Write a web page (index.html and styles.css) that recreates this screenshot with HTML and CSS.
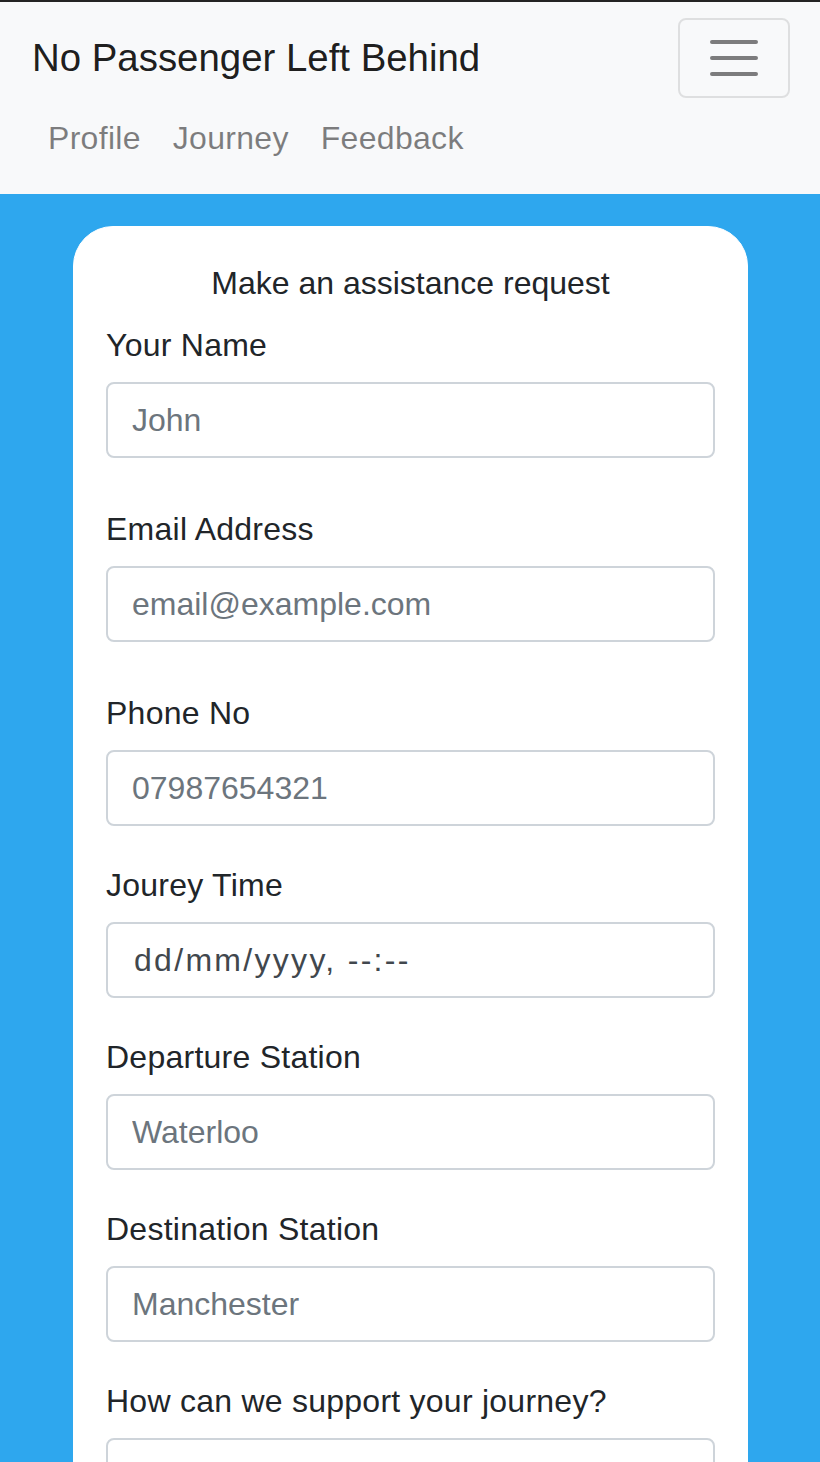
FILE: index.html
```html
<!DOCTYPE html>
<html lang="en">
<head>
<meta charset="utf-8">
<title>No Passenger Left Behind</title>
<link rel="stylesheet" href="styles.css">
</head>
<body>
<div class="topline"></div>
<nav class="navbar">
  <div class="navbar-row">
    <a class="brand" href="#">No Passenger Left Behind</a>
    <button class="toggler" type="button" aria-label="Toggle navigation">
      <svg width="60" height="60" viewBox="0 0 30 30" xmlns="http://www.w3.org/2000/svg">
        <path d="M4 7h22M4 15h22M4 23h22" stroke="rgba(0,0,0,0.5)" stroke-width="2" stroke-linecap="round" stroke-miterlimit="10" fill="none"/>
      </svg>
    </button>
  </div>
  <ul class="nav-list">
    <li><a class="nav-link" href="#">Profile</a></li>
    <li><a class="nav-link" href="#">Journey</a></li>
    <li><a class="nav-link" href="#">Feedback</a></li>
  </ul>
</nav>
<main class="page">
  <form class="card">
    <p class="card-title">Make an assistance request</p>
    <div class="group group-extra">
      <label class="label" for="name">Your Name</label>
      <input class="control" id="name" type="text" placeholder="John">
    </div>
    <div class="group group-extra">
      <label class="label" for="email">Email Address</label>
      <input class="control" id="email" type="email" placeholder="email@example.com">
    </div>
    <div class="group">
      <label class="label" for="phone">Phone No</label>
      <input class="control" id="phone" type="tel" placeholder="07987654321">
    </div>
    <div class="group">
      <label class="label" for="time">Jourey Time</label>
      <div class="control control-date" id="time">dd/mm/yyyy, --:--</div>
    </div>
    <div class="group">
      <label class="label" for="dep">Departure Station</label>
      <input class="control" id="dep" type="text" placeholder="Waterloo">
    </div>
    <div class="group">
      <label class="label" for="dest">Destination Station</label>
      <input class="control" id="dest" type="text" placeholder="Manchester">
    </div>
    <div class="group">
      <label class="label" for="support">How can we support your journey?</label>
      <textarea class="control control-area" id="support" rows="3"></textarea>
    </div>
  </form>
</main>
</body>
</html>
```
FILE: styles.css
```css
* { box-sizing: border-box; }
html, body { margin: 0; padding: 0; }
body {
  font-family: "Liberation Sans", Arial, sans-serif;
  font-size: 32px;
  line-height: 1.5;
  color: #212529;
  background: #2ea7ee;
}
.topline { height: 2px; background: #232323; }
.navbar {
  background: #f8f9fa;
  padding: 16px 32px;
}
.navbar-row {
  display: flex;
  align-items: center;
  justify-content: space-between;
}
.brand {
  display: inline-block;
  padding: 10px 0;
  font-size: 38.4px;
  line-height: 60px;
  color: rgba(0,0,0,0.9);
  text-decoration: none;
  white-space: nowrap;
}
.toggler {
  display: flex;
  padding: 8px 24px;
  border: 2px solid rgba(0,0,0,0.1);
  border-radius: 8px;
  background: transparent;
  margin-right: -2px;
}
.toggler svg { display: block; }
.nav-list {
  list-style: none;
  margin: 0;
  padding: 0;
  display: flex;
}
.nav-link {
  display: block;
  padding: 16px;
  line-height: 48px;
  letter-spacing: 0.3px;
  color: rgba(0,0,0,0.5);
  text-decoration: none;
}
.page {
  padding: 32px 72px 32px 73px;
}
.card {
  background: #fff;
  border: 1px solid #fff;
  border-radius: 40px;
  padding: 32px;
}
.card-title {
  margin: 0 0 11px;
  text-align: center;
}
.group { margin-bottom: 32px; }
.group-extra { margin-bottom: 44px; }
.label {
  display: block;
  padding-top: 3px;
  margin-bottom: 13px;
  letter-spacing: 0.25px;
}
.control {
  display: block;
  width: 100%;
  height: 76px;
  padding: 12px 24px;
  font-family: inherit;
  font-size: 32px;
  line-height: 48px;
  color: #495057;
  background: #fff;
  border: 2px solid #ced4da;
  border-radius: 8px;
  margin: 0;
}
.control::placeholder { color: #6c757d; opacity: 1; }
.control-date { padding-left: 26px; color: #41474d; letter-spacing: 2.3px; }
.control-area { height: 156px; resize: vertical; }
```
